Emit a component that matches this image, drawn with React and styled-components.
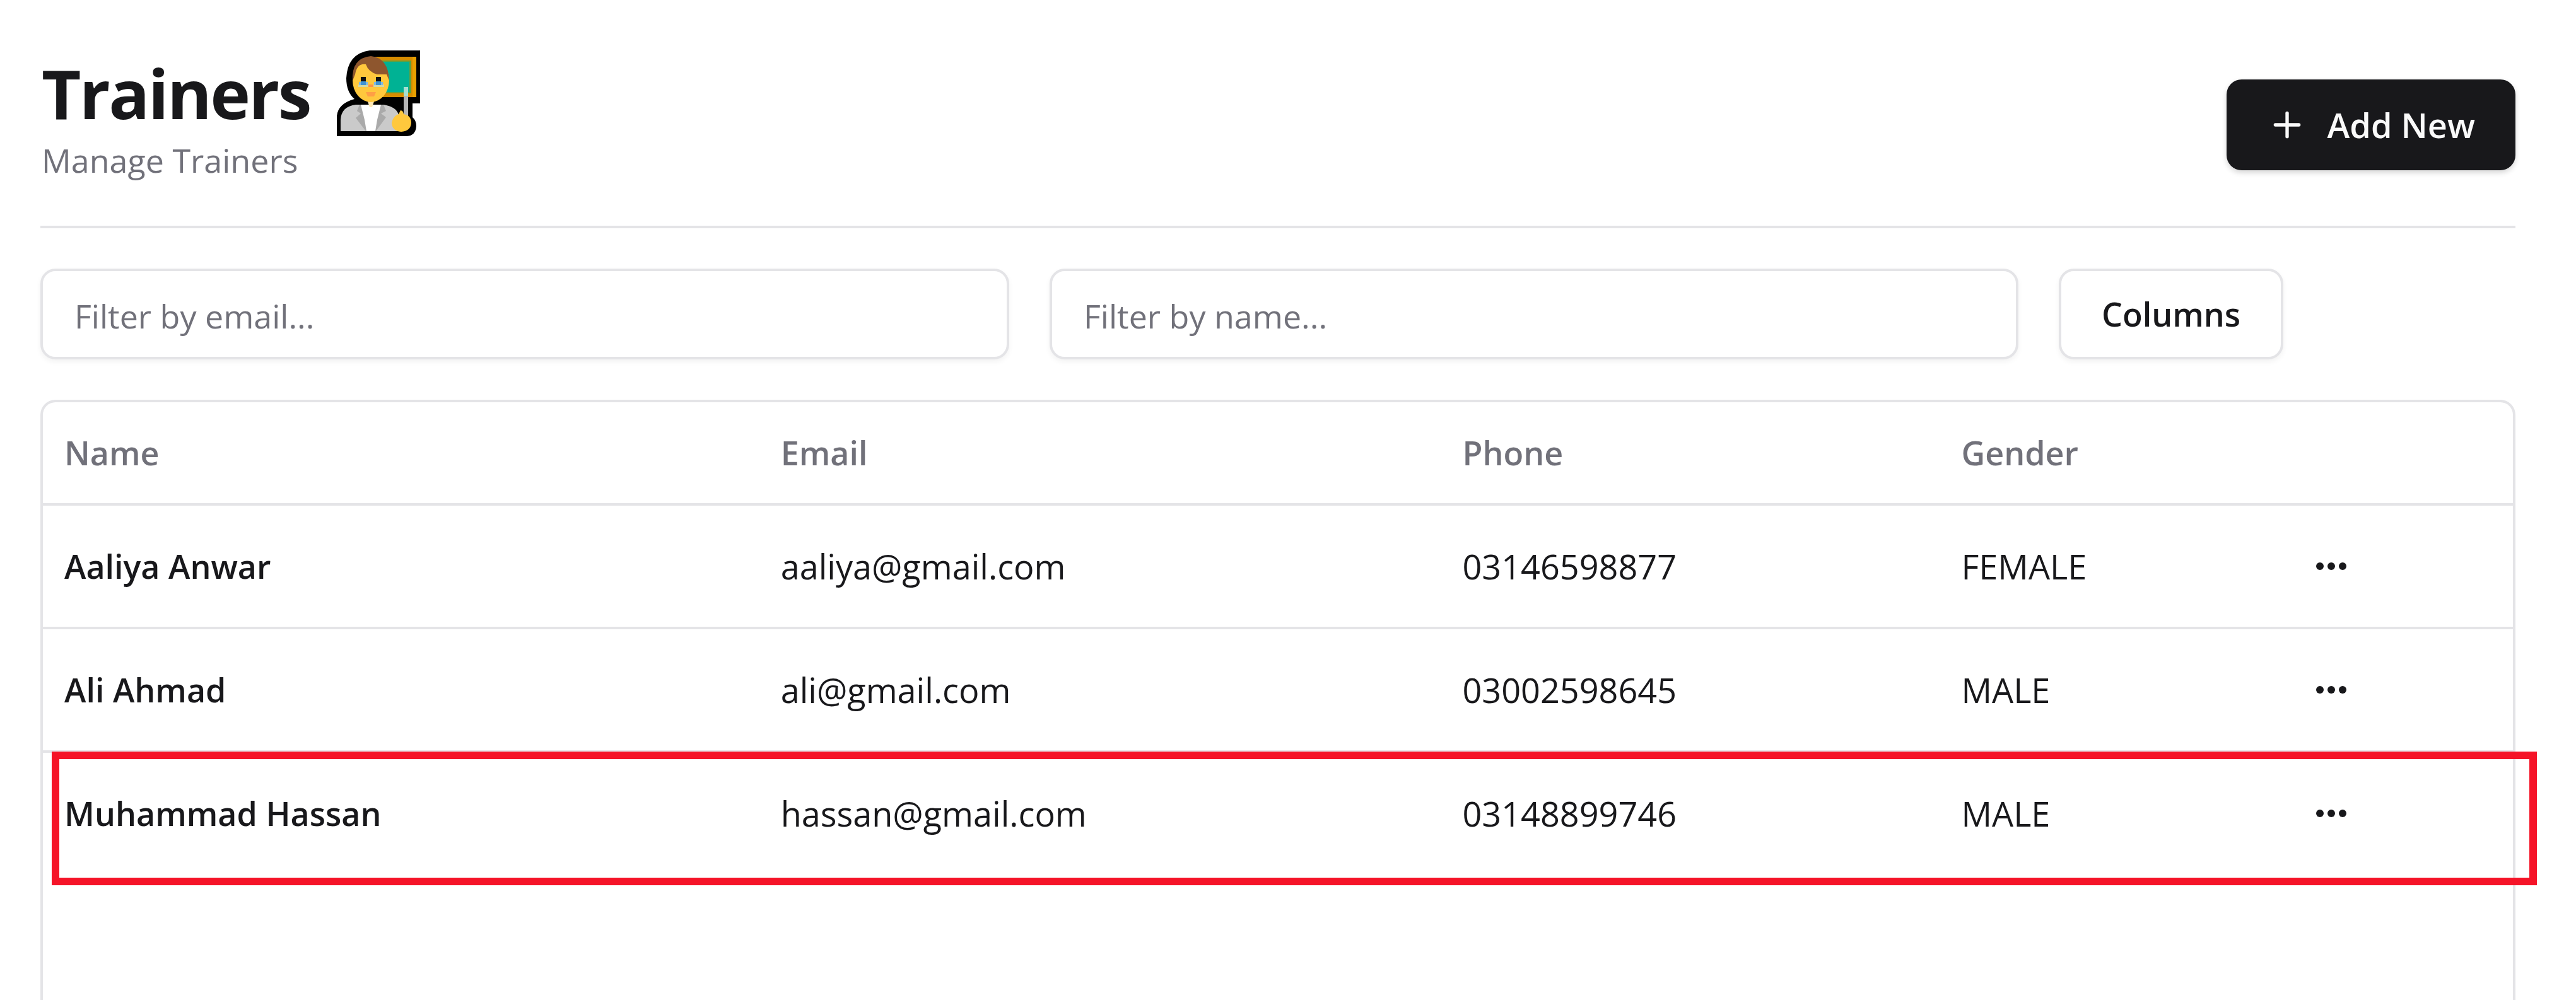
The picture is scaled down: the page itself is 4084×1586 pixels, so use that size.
import React, { useState } from "react";
import styled, { createGlobalStyle } from "styled-components";
import { Plus } from "lucide-react";

const colors = {
  ink: "#18181b",
  muted: "#71717a",
  line: "#e4e4e7",
  mark: "#f51428",
};

const GlobalStyle = createGlobalStyle`
  *, *::before, *::after { box-sizing: border-box; }
  body {
    margin: 0;
    background: #fff;
    color: ${colors.ink};
    font-family: "Open Sans", "Noto Sans", sans-serif;
    font-size: 54px;
    line-height: 80px;
  }
  button, input { font: inherit; color: inherit; }
`;

const Page = styled.main`
  display: flex;
  flex-direction: column;
  height: 100vh;
  padding: 64px 96px 0 64px;
  overflow: hidden;
`;

const Header = styled.header`
  display: flex;
  align-items: center;
  justify-content: space-between;
  padding-bottom: 26px;
  border-bottom: 4px solid ${colors.line};
`;

const Heading = styled.div`
  padding: 4px 0 52px 2px;
`;

const Title = styled.h1`
  display: flex;
  align-items: center;
  gap: 40px;
  margin: 0;
  font-size: 108px;
  font-weight: 700;
  line-height: 160px;
  letter-spacing: -0.025em;
`;

const Subtitle = styled.p`
  margin: 0;
  font-size: 52px;
  line-height: 52px;
  color: ${colors.muted};
`;

const Button = styled.button`
  display: inline-flex;
  align-items: center;
  justify-content: center;
  gap: 32px;
  height: 144px;
  padding: 0 64px;
  border: ${(p) => (p.$outline ? `4px solid ${colors.line}` : "0")};
  border-radius: 24px;
  background: ${(p) => (p.$outline ? "#fff" : colors.ink)};
  color: ${(p) => (p.$outline ? colors.ink : "#fafafa")};
  font-size: ${(p) => (p.$outline ? 52 : 54)}px;
  font-weight: 600;
  white-space: nowrap;
  box-shadow: 0 4px 8px rgba(0, 0, 0, ${(p) => (p.$outline ? 0.05 : 0.16)});
  cursor: pointer;
`;

const Filters = styled.div`
  display: flex;
  align-items: center;
  gap: 64px;
  padding: 64px 0;
`;

const Field = styled.label`
  display: flex;
  flex: 1 1 0;
  max-width: 1536px;
`;

const FilterInput = styled.input`
  width: 100%;
  height: 144px;
  padding: 4px 50px 0;
  border: 4px solid ${colors.line};
  border-radius: 24px;
  background: #fff;
  font-size: 52px;
  box-shadow: 0 4px 8px rgba(0, 0, 0, 0.05);
  &::placeholder { color: ${colors.muted}; opacity: 1; }
`;

const TablePanel = styled.section`
  flex: 1;
  border: 4px solid ${colors.line};
  border-bottom: 0;
  border-radius: 24px 24px 0 0;
`;

const Table = styled.table`
  width: 100%;
  table-layout: fixed;
  border-collapse: separate;
  border-spacing: 0;
`;

const Col = styled.col`
  width: ${(p) => p.$width};
`;

const HeadCell = styled.th`
  height: 164px;
  padding: 0 34px;
  border-bottom: 4px solid ${colors.line};
  color: ${colors.muted};
  font-size: 52px;
  font-weight: 600;
  text-align: left;
`;

const Cell = styled.td`
  height: 196px;
  padding: 0 34px;
  border-bottom: 4px solid ${colors.line};
  font-size: ${(p) => (p.$strong ? 52 : 54)}px;
  font-weight: ${(p) => (p.$strong ? 600 : 400)};
  white-space: nowrap;
`;

const Row = styled.tr`
  position: relative;
  &:last-child ${Cell} { height: 192px; border-bottom: 0; }
  ${(p) =>
    p.$marked &&
    `&::after {
      content: "";
      position: absolute;
      inset: -2px -38px -18px 14px;
      border: 12px solid ${colors.mark};
      pointer-events: none;
    }`}
`;

const MenuButton = styled.button`
  display: flex;
  align-items: center;
  justify-content: center;
  width: 124px;
  height: 124px;
  padding: 0;
  border: 0;
  border-radius: 24px;
  background: transparent;
  cursor: pointer;
`;

const TeacherIcon = () => (
  <svg width="136" height="140" viewBox="0 0 136 140" aria-hidden="true">
    <path d="M54 2H134V86H122V108Q128 113 128 122Q127 137 113 138H2V106Q4 86 30 79Q17 68 17 46Q19 7 54 2Z" fill="#000" />
    <path d="M60 12H128V76H60Z" fill="#d68c00" />
    <path d="M122 12H128V76H122Z" fill="#e8a000" />
    <path d="M64 18H120V70H64Z" fill="#5fa040" />
    <path d="M64 20H117V68H64Z" fill="#00b294" />
    <path d="M8 130V112Q9 91 32 88H76Q96 91 100 104L106 130Z" fill="#cacaca" />
    <path d="M38 88H76L80 98L72 102L80 108L64 130H48L32 109L40 102L34 98Z" fill="#aaa" />
    <path d="M40 88H72L66 112L63 130H49L46 112Z" fill="#fff" />
    <path d="M50 80H62L58 92H54Z" fill="#ffe9b5" />
    <ellipse cx="56" cy="49" rx="29" ry="35" fill="#ffc83d" />
    <path d="M27 50Q25 14 56 11Q84 14 85 50L81 40H66Q52 36 48 24Q34 22 31 40Z" fill="#8e562e" />
    <path d="M40 44h8v8h-8zM64 44h8v8h-8z" fill="#111" />
    <path d="M36 56h17v4h-17zM60 56h17v4h-17z" fill="#d2d9a6" />
    <path d="M37 52h14v5h-14zM61 52h14v5h-14z" fill="#84b9dd" />
    <path d="M40 51h8v6h-8zM64 51h8v6h-8z" fill="#3f93d2" />
    <path d="M52 56h8v4h-8z" fill="#ff9440" />
    <path d="M48 68H64L61 75H51Z" fill="#ff9f45" />
    <path d="M108 60h7v48h-7z" fill="#b5b5b5" />
    <path d="M108 60h7v14h-7z" fill="#a5e0d2" />
    <path d="M103 97Q107 97 108 103Q120 105 120 117Q119 130 104 131Q90 130 89 117Q91 106 100 103Z" fill="#ffc83d" />
  </svg>
);

const DotsIcon = () => (
  <svg width="64" height="64" viewBox="0 0 64 64" fill={colors.ink} aria-hidden="true">
    <circle cx="14" cy="32" r="6" />
    <circle cx="32" cy="32" r="6" />
    <circle cx="50" cy="32" r="6" />
  </svg>
);

const columns = [
  { label: "Name", width: "29%" },
  { label: "Email", width: "27.6%" },
  { label: "Phone", width: "20.2%" },
  { label: "Gender", width: "13.4%" },
  { label: "", width: "9.8%" },
];

const trainers = [
  { name: "Aaliya Anwar", email: "aaliya@gmail.com", phone: "03146598877", gender: "FEMALE" },
  { name: "Ali Ahmad", email: "ali@gmail.com", phone: "03002598645", gender: "MALE" },
  { name: "Muhammad Hassan", email: "hassan@gmail.com", phone: "03148899746", gender: "MALE", marked: true },
];

export default function App() {
  const [email, setEmail] = useState("");
  const [name, setName] = useState("");
  const visible = trainers.filter((t) => t.email.includes(email) && t.name.toLowerCase().includes(name.toLowerCase()));

  return (
    <>
      <GlobalStyle />
      <Page>
        <Header>
          <Heading>
            <Title>
              Trainers
              <TeacherIcon />
            </Title>
            <Subtitle>Manage Trainers</Subtitle>
          </Heading>
          <Button type="button">
            <Plus size={64} aria-hidden="true" />
            Add New
          </Button>
        </Header>
        <Filters>
          <Field>
            <FilterInput aria-label="Filter by email" placeholder="Filter by email..." value={email} onChange={(e) => setEmail(e.target.value)} />
          </Field>
          <Field>
            <FilterInput aria-label="Filter by name" placeholder="Filter by name..." value={name} onChange={(e) => setName(e.target.value)} />
          </Field>
          <Button type="button" $outline>Columns</Button>
        </Filters>
        <TablePanel>
          <Table>
            <colgroup>
              {columns.map((c) => (
                <Col key={c.label} $width={c.width} />
              ))}
            </colgroup>
            <thead>
              <tr>
                {columns.map((c) => (
                  <HeadCell key={c.label} scope="col">{c.label}</HeadCell>
                ))}
              </tr>
            </thead>
            <tbody>
              {visible.map((t) => (
                <Row key={t.email} $marked={t.marked}>
                  <Cell $strong>{t.name}</Cell>
                  <Cell>{t.email}</Cell>
                  <Cell>{t.phone}</Cell>
                  <Cell>{t.gender}</Cell>
                  <Cell>
                    <MenuButton type="button" aria-label={`Actions for ${t.name}`}>
                      <DotsIcon />
                    </MenuButton>
                  </Cell>
                </Row>
              ))}
            </tbody>
          </Table>
        </TablePanel>
      </Page>
    </>
  );
}
